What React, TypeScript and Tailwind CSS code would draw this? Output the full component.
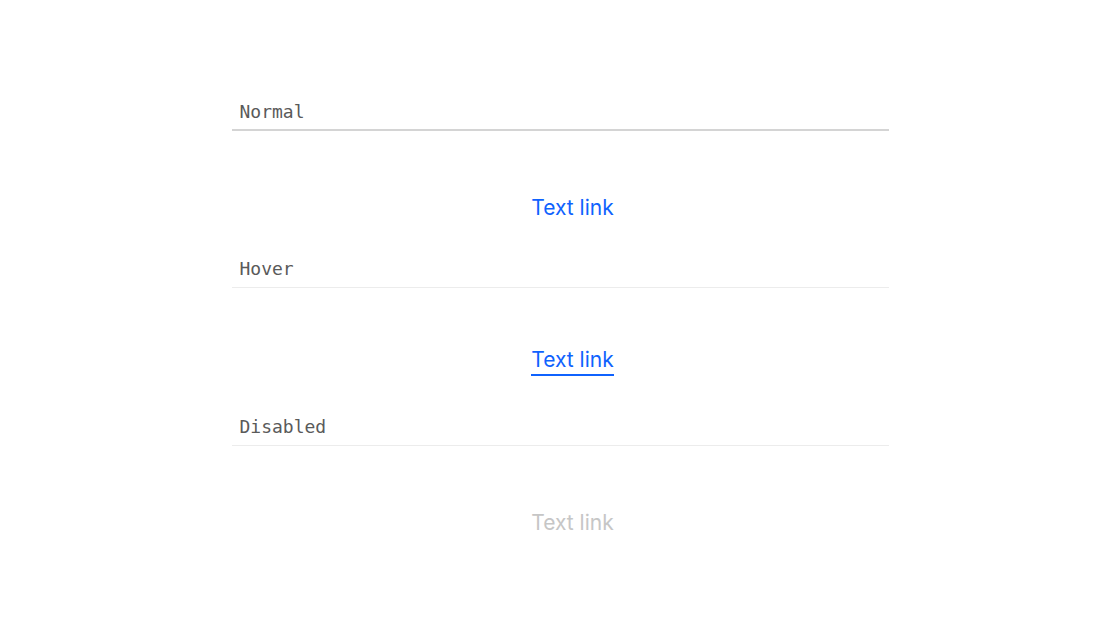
import React from 'react';

const mono = { fontFamily: '"DejaVu Sans Mono", "Liberation Mono", monospace' };

interface StateRowProps {
  label: string;
  line: string;
  children: React.ReactNode;
  bodyClass: string;
}

const StateRow: React.FC<StateRowProps> = ({ label, line, children, bodyClass }) => {
  return (
    <section>
      <div className={`h-8 flex items-start pt-[1px] pl-2 ${line}`}>
        <span className="text-[18px] leading-6 text-[#5a5a5a]" style={mono}>{label}</span>
      </div>
      <div className={`flex justify-center items-start pl-[25px] ${bodyClass}`}>{children}</div>
    </section>
  );
};

export default function App() {
  return (
    <div className="min-h-[644px] bg-white font-['Inter',sans-serif]">
      <div className="w-[657px] mx-auto pt-[99px]">
        <StateRow label="Normal" line="border-b-2 border-[#d4d4d4]" bodyClass="h-[125px] pt-[63px]">
          <a href="#" className="text-[21px] leading-7 text-[#0f62fe]">Text link</a>
        </StateRow>
        <StateRow label="Hover" line="border-b border-[#ececec]" bodyClass="h-[126px] pt-[58px]">
          <a href="#" className="text-[21px] leading-7 text-[#0f62fe] border-b-2 border-[#0f62fe]">Text link</a>
        </StateRow>
        <StateRow label="Disabled" line="border-b border-[#ececec]" bodyClass="h-[124px] pt-[63px]">
          <span className="text-[21px] leading-7 text-[#c6c6c6] cursor-not-allowed">Text link</span>
        </StateRow>
      </div>
    </div>
  );
}
